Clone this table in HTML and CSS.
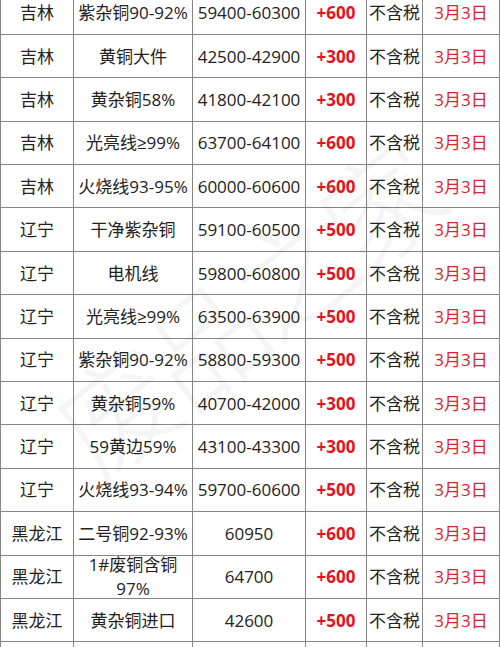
FILE: index.html
```html
<!DOCTYPE html>
<html lang="zh">
<head>
<meta charset="utf-8">
<link rel="stylesheet" href="styles.css">
</head>
<body>
<div class="page">
  <div class="sheet">
    <div class="c">吉林</div><div class="c">紫杂铜90-92%</div><div class="c">59400-60300</div><div class="c up">+600</div><div class="c">不含税</div><div class="c date">3月3日</div>
    <div class="c">吉林</div><div class="c">黄铜大件</div><div class="c">42500-42900</div><div class="c up">+300</div><div class="c">不含税</div><div class="c date">3月3日</div>
    <div class="c">吉林</div><div class="c">黄杂铜58%</div><div class="c">41800-42100</div><div class="c up">+300</div><div class="c">不含税</div><div class="c date">3月3日</div>
    <div class="c">吉林</div><div class="c">光亮线≥99%</div><div class="c">63700-64100</div><div class="c up">+600</div><div class="c">不含税</div><div class="c date">3月3日</div>
    <div class="c">吉林</div><div class="c">火烧线93-95%</div><div class="c">60000-60600</div><div class="c up">+600</div><div class="c">不含税</div><div class="c date">3月3日</div>
    <div class="c">辽宁</div><div class="c">干净紫杂铜</div><div class="c">59100-60500</div><div class="c up">+500</div><div class="c">不含税</div><div class="c date">3月3日</div>
    <div class="c">辽宁</div><div class="c">电机线</div><div class="c">59800-60800</div><div class="c up">+500</div><div class="c">不含税</div><div class="c date">3月3日</div>
    <div class="c">辽宁</div><div class="c">光亮线≥99%</div><div class="c">63500-63900</div><div class="c up">+500</div><div class="c">不含税</div><div class="c date">3月3日</div>
    <div class="c">辽宁</div><div class="c">紫杂铜90-92%</div><div class="c">58800-59300</div><div class="c up">+500</div><div class="c">不含税</div><div class="c date">3月3日</div>
    <div class="c">辽宁</div><div class="c">黄杂铜59%</div><div class="c">40700-42000</div><div class="c up">+300</div><div class="c">不含税</div><div class="c date">3月3日</div>
    <div class="c">辽宁</div><div class="c">59黄边59%</div><div class="c">43100-43300</div><div class="c up">+300</div><div class="c">不含税</div><div class="c date">3月3日</div>
    <div class="c">辽宁</div><div class="c">火烧线93-94%</div><div class="c">59700-60600</div><div class="c up">+500</div><div class="c">不含税</div><div class="c date">3月3日</div>
    <div class="c">黑龙江</div><div class="c">二号铜92-93%</div><div class="c">60950</div><div class="c up">+600</div><div class="c">不含税</div><div class="c date">3月3日</div>
    <div class="c">黑龙江</div><div class="c two">1#废铜含铜<br>97%</div><div class="c">64700</div><div class="c up">+600</div><div class="c">不含税</div><div class="c date">3月3日</div>
    <div class="c">黑龙江</div><div class="c">黄杂铜进口</div><div class="c">42600</div><div class="c up">+500</div><div class="c">不含税</div><div class="c date">3月3日</div>
    <div class="c">黑龙江</div><div class="c two top">叫叫黄铜含铁<br>量</div><div class="c">41000</div><div class="c up">+500</div><div class="c">不含税</div><div class="c date">3月3日</div>
  </div>
  <div class="mark">废品之家</div>
</div>
</body>
</html>
```

FILE: styles.css
```css
html, body {
  margin: 0;
  padding: 0;
  background: #ffffff;
}
body {
  width: 500px;
  height: 647px;
  overflow: hidden;
  font-family: "Open Sans", "Noto Sans CJK SC", sans-serif;
}
.page {
  position: relative;
  width: 500px;
  height: 647px;
  overflow: hidden;
}
.sheet {
  margin-top: -9.5px;
  display: grid;
  grid-template-columns: 72px 118px 112px 60px 55px 76px;
  grid-template-rows: repeat(15, 42.4px) 70px;
  gap: 1px;
  padding: 1px;
  background: #858585;
  width: 500px;
  box-sizing: border-box;
}
.c {
  background: #ffffff;
  display: flex;
  align-items: center;
  justify-content: center;
  text-align: center;
  font-size: 17px;
  color: #222222;
  white-space: nowrap;
  line-height: 22px;
  padding-top: 1px;
  box-sizing: border-box;
}
.c.up {
  color: #e3141e;
  font-weight: 700;
  font-size: 17px;
}
.c.date {
  color: #dc2430;
}
.c.two {
  line-height: 24px;
  overflow: visible;
}
.c.top {
  align-items: flex-start;
  padding-top: 3px;
}
.mark {
  position: absolute;
  left: 20px;
  top: 220px;
  font-family: "Noto Sans CJK SC", sans-serif;
  font-size: 118px;
  font-weight: 300;
  color: rgba(0, 0, 0, 0.04);
  transform: rotate(-38deg);
  white-space: nowrap;
  letter-spacing: -6px;
  pointer-events: none;
}
```
